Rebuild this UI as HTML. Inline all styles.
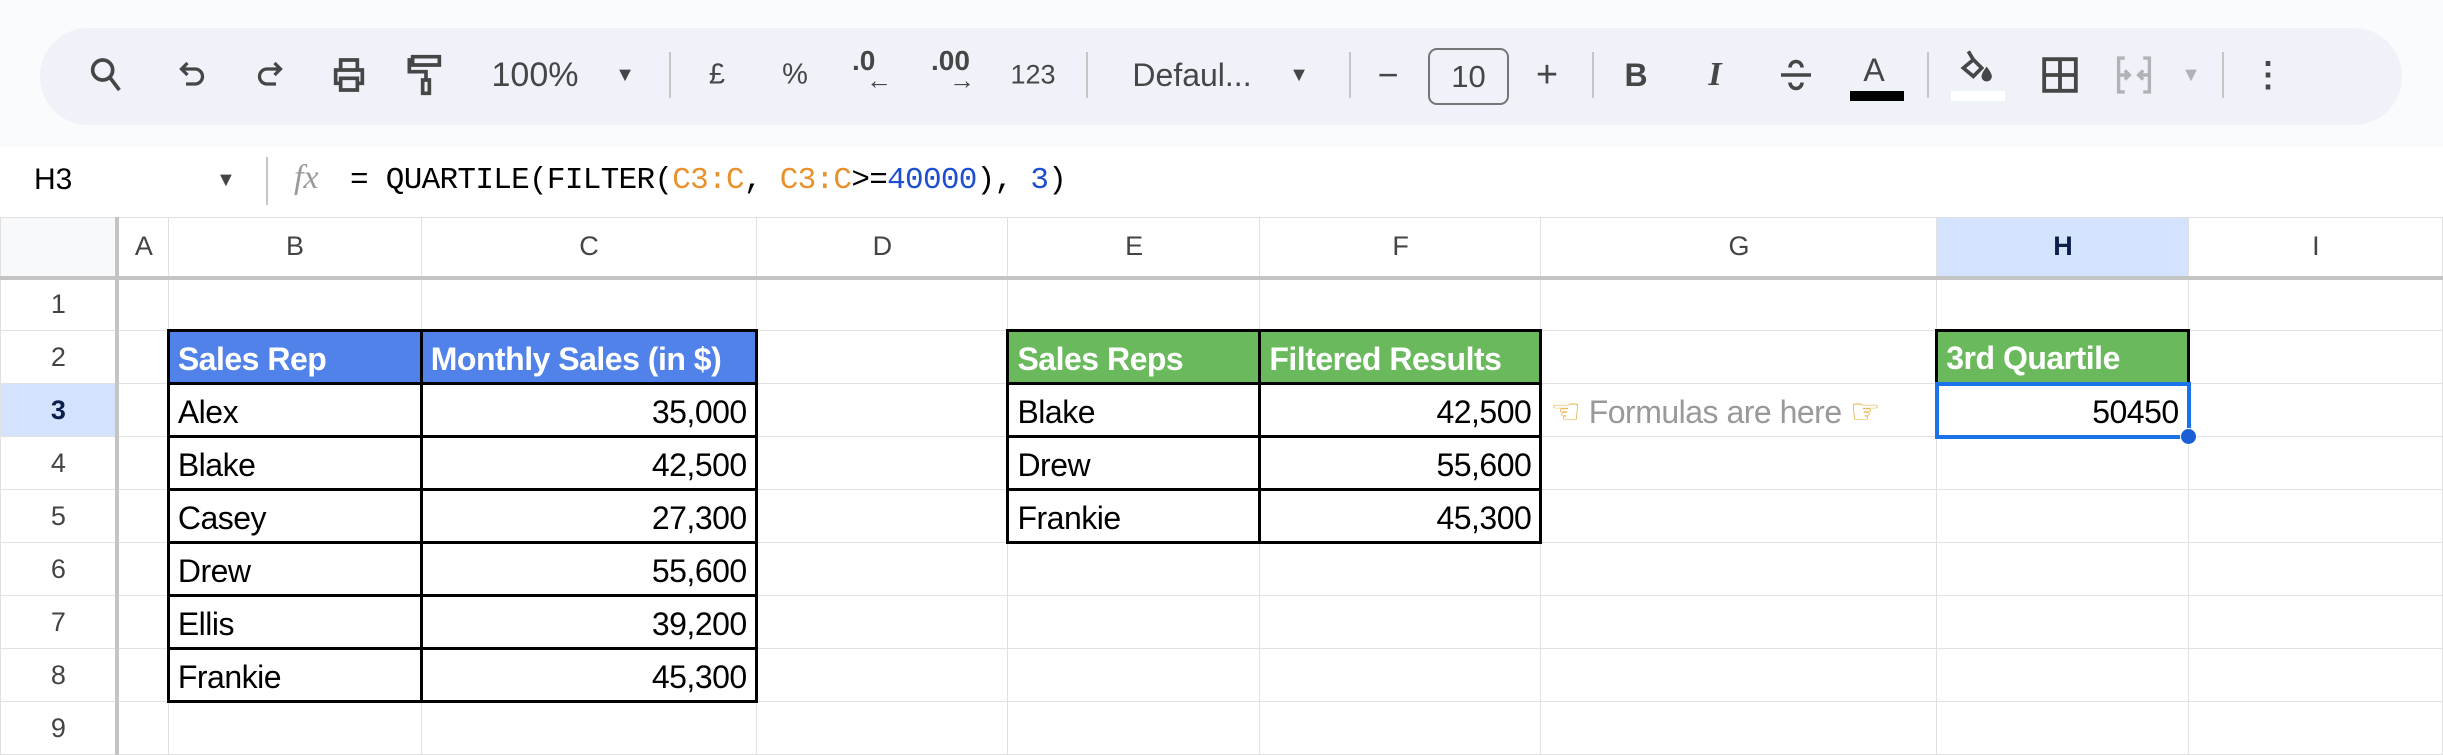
<!DOCTYPE html>
<html><head><meta charset="utf-8">
<style>
*{margin:0;padding:0;box-sizing:border-box}
body{width:2443px;height:755px;overflow:hidden;background:#fff;font-family:"Liberation Sans",Arial,sans-serif;position:relative}
#top{position:absolute;left:0;top:0;width:2443px;height:147px;background:#f9fbfd}
#pill{position:absolute;left:40px;top:28px;width:2362px;height:97px;background:#eff3f9;border-radius:48px}
.ic{position:absolute;top:75px;transform:translate(-50%,-50%);color:#444746;font-size:31px;line-height:1}
.sep{position:absolute;top:52px;width:2px;height:46px;background:#c4c7c5}
svg{display:block}
#fbar{position:absolute;top:147px;left:0;width:2443px;height:70px;background:#fff}
table{position:absolute;left:0;top:217px;border-collapse:collapse;table-layout:fixed;font-size:32px}
td{border:1px solid #e1e1e1;height:53px;padding:4px 8px 0 8px;white-space:nowrap;overflow:visible;color:#000;letter-spacing:-0.5px}
tr.h td{height:60px;text-align:center;color:#444;font-size:27px;border-bottom:4px solid #c4c4c4;padding:0}
td.rh{text-align:center;color:#444;font-size:27px;border-right:4px solid #c4c4c4;padding:0}
.r{text-align:right}
.bl{background:#5182ea;color:#fff;font-weight:bold;border:3px solid #000}
.gr{background:#6aba5d;color:#fff;font-weight:bold;border:3px solid #000}
.bk{border:3px solid #000}
.sel{background:#d3e3fd!important;color:#0b1f4b!important;font-weight:bold}
</style></head><body>
<div id="top"><div id="pill"></div></div>
<div class="ic" style="left:106px"><svg width="40" height="40" viewBox="0 0 24 24" fill="none" stroke="#444746" stroke-width="2.2"><circle cx="10" cy="9" r="6"/><path d="M14 13l6 8"/></svg></div>
<div class="ic" style="left:192px"><svg width="36" height="36" viewBox="0 0 24 24" fill="none" stroke="#444746" stroke-width="2.2"><path d="M9 4L5 8l4 4M5 8h9a5 5 0 010 10H8"/></svg></div>
<div class="ic" style="left:270px"><svg width="36" height="36" viewBox="0 0 24 24" fill="none" stroke="#444746" stroke-width="2.2"><path d="M15 4l4 4-4 4M19 8h-9a5 5 0 000 10h6"/></svg></div>
<div class="ic" style="left:349px"><svg width="40" height="40" viewBox="0 0 24 24" fill="none" stroke="#444746" stroke-width="2.2"><path d="M7 8V3h10v5M7 17H4V9h16v8h-3M7 14h10v7H7z"/></svg></div>
<div class="ic" style="left:426px"><svg width="40" height="44" viewBox="0 0 24 26" fill="none" stroke="#444746" stroke-width="2.2"><path d="M4 2h16v5H4zM4 4H2v7h10v5M10 16h4v8h-4z"/></svg></div>
<div class="ic" style="left:535px;font-size:34px">100%</div>
<div class="ic" style="left:625px;font-size:20px">▼</div>
<div class="sep" style="left:669px"></div>
<div class="ic" style="left:717px;font-size:29px">£</div>
<div class="ic" style="left:795px;font-size:29px">%</div>
<div class="ic" style="left:872px;font-size:28px;top:70px;font-weight:bold">.0<div style="font-size:26px;margin-left:14px;margin-top:-8px">←</div></div>
<div class="ic" style="left:953px;font-size:28px;top:70px;font-weight:bold">.00<div style="font-size:26px;margin-left:18px;margin-top:-8px">→</div></div>
<div class="ic" style="left:1033px;font-size:27px">123</div>
<div class="sep" style="left:1086px"></div>
<div class="ic" style="left:1192px;font-size:32px">Defaul...</div>
<div class="ic" style="left:1299px;font-size:20px">▼</div>
<div class="sep" style="left:1349px"></div>
<div class="ic" style="left:1388px;font-size:36px">−</div>
<div style="position:absolute;left:1428px;top:48px;width:81px;height:57px;border:2px solid #747775;border-radius:9px;text-align:center;line-height:53px;font-size:31px;color:#444746">10</div>
<div class="ic" style="left:1547px;font-size:38px">+</div>
<div class="sep" style="left:1592px"></div>
<div class="ic" style="left:1636px;font-size:32px;font-weight:bold">B</div>
<div class="ic" style="left:1715px;font-size:34px;font-weight:bold;font-style:italic;font-family:'Liberation Serif',serif">I</div>
<div class="ic" style="left:1796px"><svg width="36" height="40" viewBox="0 0 24 26" fill="none" stroke="#444746" stroke-width="2.4"><path d="M2 13h20M8 8a4 4 0 018 0M8 18a4 4 0 008 0"/></svg></div>
<div class="ic" style="left:1874px;top:70px;font-size:32px">A</div>
<div style="position:absolute;left:1850px;top:91px;width:54px;height:10px;background:#000"></div>
<div class="sep" style="left:1927px"></div>
<div class="ic" style="left:1975px;top:68px"><svg width="40" height="40" viewBox="0 0 24 24" fill="none" stroke="#444746" stroke-width="2.2"><path d="M8 2l3 5M5 12l6-5 5 5-5 5z" /><path d="M19 13c1.5 2 2 3 2 4a2 2 0 01-4 0c0-1 .5-2 2-4z" fill="#444746"/></svg></div>
<div style="position:absolute;left:1951px;top:91px;width:54px;height:10px;background:#fff"></div>
<div class="ic" style="left:2060px"><svg width="38" height="38" viewBox="0 0 24 24" fill="none" stroke="#444746" stroke-width="2.4"><path d="M2 2h20v20H2zM12 2v20M2 12h20"/></svg></div>
<div class="ic" style="left:2134px"><svg width="38" height="40" viewBox="0 0 24 26" fill="none" stroke="#b0b3b5" stroke-width="2.2"><path d="M6 2H2v22h4M18 2h4v22h-4M2 13h7M6 10l3 3-3 3M22 13h-7M18 10l-3 3 3 3"/></svg></div>
<div class="ic" style="left:2191px;font-size:20px;color:#b0b3b5">▼</div>
<div class="sep" style="left:2222px"></div>
<div class="ic" style="left:2268px;font-size:34px;font-weight:bold">⋮</div>
<div id="fbar">
<div style="position:absolute;left:34px;top:16px;font-size:30px;color:#000">H3</div>
<div style="position:absolute;left:216px;top:22px;font-size:20px;color:#444">▼</div>
<div style="position:absolute;left:266px;top:10px;width:2px;height:48px;background:#c4c7c5"></div>
<div style="position:absolute;left:294px;top:12px;font-size:34px;color:#999;font-style:italic;font-family:'Liberation Serif',serif">fx</div>
<div style="position:absolute;left:350px;top:16px;font-size:31px;font-family:'Liberation Mono',monospace;color:#000;letter-spacing:-0.7px">= QUARTILE(FILTER(<span style="color:#e8912d">C3:C</span>, <span style="color:#e8912d">C3:C</span>&gt;=<span style="color:#1f4fd1">40000</span>), <span style="color:#1f4fd1">3</span>)</div>
</div>
<table>
<colgroup><col style="width:117px"><col style="width:51px"><col style="width:253px"><col style="width:335px"><col style="width:252px"><col style="width:252px"><col style="width:281px"><col style="width:396px"><col style="width:252px"><col style="width:254px"></colgroup>
<tr class="h"><td style="background:#f8f9fa;border-right:4px solid #c4c4c4"></td><td>A</td><td>B</td><td>C</td><td>D</td><td>E</td><td>F</td><td>G</td><td class="sel" style="font-weight:bold">H</td><td>I</td></tr>
<tr><td class="rh">1</td><td></td><td></td><td></td><td></td><td></td><td></td><td></td><td></td><td></td></tr>
<tr><td class="rh">2</td><td></td><td class="bl">Sales Rep</td><td class="bl">Monthly Sales (in $)</td><td></td><td class="gr">Sales Reps</td><td class="gr">Filtered Results</td><td></td><td class="gr">3rd Quartile</td><td></td></tr>
<tr><td class="rh sel">3</td><td></td><td class="bk">Alex</td><td class="bk r">35,000</td><td></td><td class="bk">Blake</td><td class="bk r">42,500</td><td style="color:#999;padding-left:8px"><span style="color:#e0a82e;font-size:34px">☜</span> Formulas are here <span style="color:#e0a82e;font-size:34px">☞</span></td><td class="r" style="border:4px solid #1a73e8;position:relative">50450<div style="position:absolute;right:-10px;bottom:-10px;width:17px;height:17px;border-radius:50%;background:#1a5fd6;border:1px solid #fff"></div></td><td></td></tr>
<tr><td class="rh">4</td><td></td><td class="bk">Blake</td><td class="bk r">42,500</td><td></td><td class="bk">Drew</td><td class="bk r">55,600</td><td></td><td></td><td></td></tr>
<tr><td class="rh">5</td><td></td><td class="bk">Casey</td><td class="bk r">27,300</td><td></td><td class="bk">Frankie</td><td class="bk r">45,300</td><td></td><td></td><td></td></tr>
<tr><td class="rh">6</td><td></td><td class="bk">Drew</td><td class="bk r">55,600</td><td></td><td></td><td></td><td></td><td></td><td></td></tr>
<tr><td class="rh">7</td><td></td><td class="bk">Ellis</td><td class="bk r">39,200</td><td></td><td></td><td></td><td></td><td></td><td></td></tr>
<tr><td class="rh">8</td><td></td><td class="bk">Frankie</td><td class="bk r">45,300</td><td></td><td></td><td></td><td></td><td></td><td></td></tr>
<tr><td class="rh">9</td><td></td><td></td><td></td><td></td><td></td><td></td><td></td><td></td><td></td></tr>
</table>
</body></html>
